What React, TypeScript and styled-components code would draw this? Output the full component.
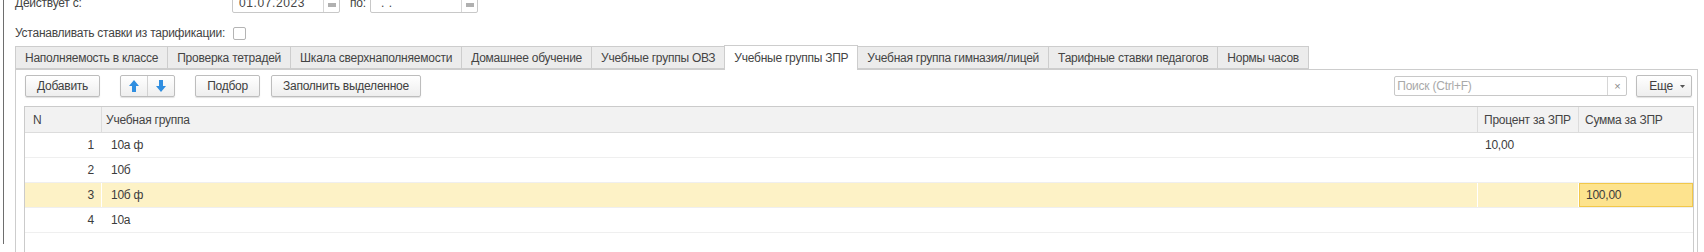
import React from 'react';
import styled, { createGlobalStyle } from 'styled-components';

const GlobalStyle = createGlobalStyle`
  html, body {
    margin: 0;
    padding: 0;
    background: #fff;
    overflow: hidden;
  }
  body {
    font-family: "Liberation Sans", Arial, sans-serif;
    font-size: 12px;
    letter-spacing: -0.24px;
    color: #444;
  }
`;

const tabs = [
  'Наполняемость в классе',
  'Проверка тетрадей',
  'Шкала сверхнаполняемости',
  'Домашнее обучение',
  'Учебные группы ОВЗ',
  'Учебные группы ЗПР',
  'Учебная группа гимназия/лицей',
  'Тарифные ставки педагогов',
  'Нормы часов',
];

const rows = [
  { n: 1, group: '10а ф', percent: '10,00', sum: '' },
  { n: 2, group: '10б', percent: '', sum: '' },
  { n: 3, group: '10б ф', percent: '', sum: '100,00' },
  { n: 4, group: '10а', percent: '', sum: '' },
];

const Screen = styled.div`
  height: 252px;
  overflow: hidden;
  padding-left: 3px;
`;

const Frame = styled.div`
  height: 100%;
  margin-top: 5px;
  border-left: 1px solid #6e6e6e;
  padding: 0 6px 0 11px;
`;

const Form = styled.div`
  margin-top: -13px;
  display: flex;
  flex-direction: column;
`;

const FieldRow = styled.div`
  display: flex;
  align-items: flex-end;
  height: 21px;
`;

const Label = styled.span<{ $width?: number; $lift?: number }>`
  white-space: nowrap;
  line-height: 14px;
  padding-bottom: ${p => p.$lift ?? 0}px;
  ${p => (p.$width ? `width: ${p.$width}px; flex: none;` : '')}
`;

const DateField = styled.div`
  display: flex;
  width: 108px;
  height: 21px;
  box-sizing: border-box;
  border: 1px solid #c8c8c8;
  border-radius: 2px;
  background: #fff;
`;

const DateText = styled.div`
  flex: 1;
  display: flex;
  align-items: flex-end;
  padding: 0 0 2px 6px;
  line-height: 14px;
  letter-spacing: 0.6px;
`;

const CalendarButton = styled.div`
  width: 16px;
  border-left: 1px solid #d6d6d6;
  display: flex;
  align-items: flex-end;
  justify-content: center;
  padding-bottom: 5px;
  box-sizing: border-box;
`;

const ToLabel = styled(Label)`
  margin: 0 5px 0 10px;
  width: 15px;
`;

const CheckRow = styled.div`
  display: flex;
  align-items: center;
  height: 22px;
  margin-top: 9px;
`;

const CheckBox = styled.span`
  width: 11px;
  height: 11px;
  margin-left: 8px;
  border: 1px solid #b4b4b4;
  border-radius: 2px;
  background: #fff;
`;

const TabStrip = styled.div`
  display: flex;
  align-items: flex-end;
  height: 25px;
`;

const Tab = styled.div<{ $active?: boolean }>`
  height: ${p => (p.$active ? 25 : 23)}px;
  box-sizing: border-box;
  padding: 0 9px;
  display: flex;
  align-items: center;
  white-space: nowrap;
  border: 1px solid #cdcdcd;
  border-bottom: ${p => (p.$active ? 'none' : '1px solid #cdcdcd')};
  background: ${p => (p.$active ? '#fff' : '#ececec')};
  margin-left: -1px;
  position: relative;
  z-index: ${p => (p.$active ? 1 : 0)};
  margin-bottom: ${p => (p.$active ? -1 : 0)}px;
  &:first-child {
    margin-left: 0;
  }
`;

const Panel = styled.div`
  border: 1px solid #cdcdcd;
  border-bottom: none;
  padding: 5px 3px 0 8px;
  height: 200px;
`;

const Toolbar = styled.div`
  display: flex;
  align-items: center;
  height: 22px;
  padding: 0 2px 0 1px;
`;

const Button = styled.div<{ $gap?: number }>`
  height: 22px;
  box-sizing: border-box;
  padding: 0 11px;
  margin-right: ${p => p.$gap ?? 0}px;
  display: flex;
  align-items: center;
  white-space: nowrap;
  color: #404040;
  border: 1px solid #bdbdbd;
  border-radius: 2px;
  background: linear-gradient(#ffffff, #eeeeee);
  box-shadow: 0 1px 1px rgba(0, 0, 0, 0.12);
`;

const ButtonGroup = styled.div`
  display: flex;
  height: 22px;
  margin-right: 20px;
  box-sizing: border-box;
  border: 1px solid #bdbdbd;
  border-radius: 2px;
  background: linear-gradient(#ffffff, #eeeeee);
  box-shadow: 0 1px 1px rgba(0, 0, 0, 0.12);
`;

const IconButton = styled.div`
  width: 26px;
  display: flex;
  align-items: center;
  justify-content: center;
  & + & {
    border-left: 1px solid #d2d2d2;
  }
`;

const Spacer = styled.div`
  flex: 1;
`;

const Search = styled.div`
  display: flex;
  width: 233px;
  height: 20px;
  box-sizing: border-box;
  border: 1px solid #c8c8c8;
  border-radius: 2px;
  margin-right: 9px;
`;

const SearchText = styled.div`
  flex: 1;
  display: flex;
  align-items: center;
  padding-left: 2px;
  color: #a9a9a9;
`;

const ClearButton = styled.div`
  width: 18px;
  border-left: 1px solid #d6d6d6;
  display: flex;
  align-items: center;
  justify-content: center;
  color: #8a8a8a;
  font-size: 11px;
`;

const MoreButton = styled(Button)`
  padding: 0 6px 0 12px;
  gap: 7px;
`;

const Table = styled.div`
  margin-top: 9px;
  border: 1px solid #cbcbcb;
  border-bottom: none;
  height: 160px;
`;

const Line = styled.div<{ $head?: boolean; $current?: boolean }>`
  display: grid;
  grid-template-columns: 77px 1fr 101px 114px;
  height: ${p => (p.$head ? 26 : 25)}px;
  box-sizing: border-box;
  border-bottom: 1px solid ${p => (p.$head ? '#dcdcdc' : '#efefef')};
  background: ${p => (p.$head ? '#f2f2f2' : p.$current ? '#fdf2c6' : '#fff')};
`;

const HeadCell = styled.div<{ $pad: number }>`
  display: flex;
  align-items: center;
  padding-left: ${p => p.$pad}px;
  border-right: 1px solid #dcdcdc;
  white-space: nowrap;
  &:last-child {
    border-right: none;
  }
`;

const Cell = styled.div<{ $right?: boolean; $pad?: number; $selected?: boolean }>`
  display: flex;
  align-items: center;
  justify-content: ${p => (p.$right ? 'flex-end' : 'flex-start')};
  padding: ${p => (p.$right ? '0 7px 0 0' : `0 0 0 ${p.$pad ?? 6}px`)};
  border-right: 1px solid #fff;
  white-space: nowrap;
  color: #3c3c3c;
  &:last-child {
    border-right: none;
  }
  ${p =>
    p.$selected
      ? `background: #fde38e; box-shadow: inset 0 0 0 1px #f2c84a;`
      : ''}
`;

const CalendarIcon = () => (
  <svg width="8" height="4" viewBox="0 0 8 4">
    <rect x="0" y="0" width="8" height="4" fill="#b0b0b0" />
  </svg>
);

const ArrowIcon = ({ down }: { down?: boolean }) => (
  <svg width="10" height="12" viewBox="0 0 10 12" style={down ? { transform: 'rotate(180deg)' } : undefined}>
    <path d="M5 0 L10 6 H7 V12 H3 V6 H0 Z" fill="#2f8ee0" />
  </svg>
);

const Caret = () => (
  <svg width="5" height="3" viewBox="0 0 5 3">
    <path d="M0 0 H5 L2.5 3 Z" fill="#555" />
  </svg>
);

const App: React.FC = () => {
  return (
    <Screen>
      <GlobalStyle />
      <Frame>
        <Form>
          <FieldRow>
            <Label $width={217} $lift={3}>
              Действует с:
            </Label>
            <DateField>
              <DateText>01.07.2023</DateText>
              <CalendarButton>
                <CalendarIcon />
              </CalendarButton>
            </DateField>
            <ToLabel $lift={3}>по:</ToLabel>
            <DateField>
              <DateText>&nbsp;. .</DateText>
              <CalendarButton>
                <CalendarIcon />
              </CalendarButton>
            </DateField>
          </FieldRow>
          <CheckRow>
            <Label>Устанавливать ставки из тарификации:</Label>
            <CheckBox />
          </CheckRow>
          <TabStrip>
            {tabs.map(t => (
              <Tab key={t} $active={t === 'Учебные группы ЗПР'}>
                {t}
              </Tab>
            ))}
          </TabStrip>
          <Panel>
            <Toolbar>
              <Button $gap={20}>Добавить</Button>
              <ButtonGroup>
                <IconButton>
                  <ArrowIcon />
                </IconButton>
                <IconButton>
                  <ArrowIcon down />
                </IconButton>
              </ButtonGroup>
              <Button $gap={11}>Подбор</Button>
              <Button>Заполнить выделенное</Button>
              <Spacer />
              <Search>
                <SearchText>Поиск (Ctrl+F)</SearchText>
                <ClearButton>×</ClearButton>
              </Search>
              <MoreButton>
                Еще
                <Caret />
              </MoreButton>
            </Toolbar>
            <Table>
              <Line $head>
                <HeadCell $pad={8}>N</HeadCell>
                <HeadCell $pad={4}>Учебная группа</HeadCell>
                <HeadCell $pad={6}>Процент за ЗПР</HeadCell>
                <HeadCell $pad={6}>Сумма за ЗПР</HeadCell>
              </Line>
              {rows.map(r => (
                <Line key={r.n} $current={r.n === 3}>
                  <Cell $right>{r.n}</Cell>
                  <Cell $pad={9}>{r.group}</Cell>
                  <Cell $pad={7}>{r.percent}</Cell>
                  <Cell $pad={7} $selected={r.n === 3}>
                    {r.sum}
                  </Cell>
                </Line>
              ))}
            </Table>
          </Panel>
        </Form>
      </Frame>
    </Screen>
  );
};

export default App;
